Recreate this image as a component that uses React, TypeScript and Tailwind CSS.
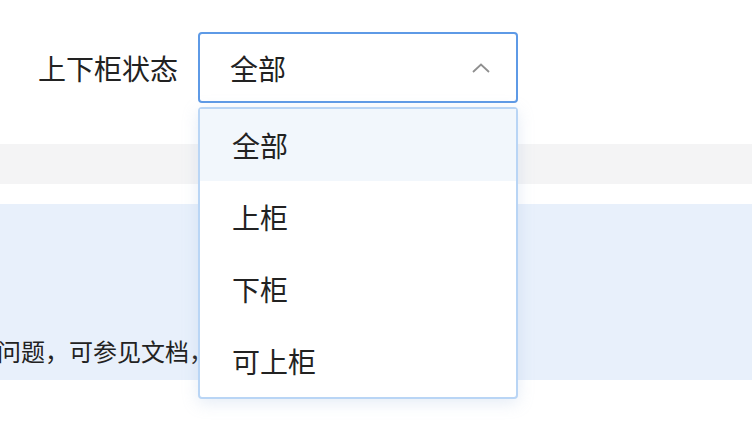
import React from "react";

const font = { fontFamily: '"Noto Sans CJK SC", "Noto Sans", sans-serif' };

export default function App() {
  const items = ["全部", "上柜", "下柜", "可上柜"];
  return (
    <div className="relative w-[752px] h-[446px] bg-white overflow-hidden text-[#222]" style={font}>
      <div className="flex items-center pt-[32px] pl-[38px] gap-[20px]">
        <span className="text-[28px] leading-none">上下柜状态</span>
        <div className="w-[320px] h-[71px] border-2 border-[#5e9ae6] rounded-[4px] flex items-center justify-between pl-[30px] pr-[26px]">
          <span className="text-[28px] leading-none">全部</span>
          <svg width="18" height="10" viewBox="0 0 18 10" fill="none">
            <path d="M1 9 L9 1.5 L17 9" stroke="#8f8f8f" strokeWidth="1.8" />
          </svg>
        </div>
      </div>
      <div className="mt-[41px] h-[40px] bg-[#f4f4f5]" />
      <div className="mt-[20px] h-[176px] bg-[#e8f0fb] flex items-end pb-[17px] -ml-[3px]">
        <span className="text-[24px] leading-none whitespace-nowrap">问题，可参见文档，</span>
      </div>
      <div className="absolute left-[198px] top-[107px] w-[320px] border-2 border-[#b9d5f5] rounded-[4px] bg-white shadow-[0_4px_16px_rgba(150,180,220,0.25)]">
        {items.map((t, i) => (
          <div
            key={t}
            className={`h-[72px] flex items-center pl-[32px] text-[28px] leading-none ${i === 0 ? "bg-[#f2f7fc]" : ""}`}
          >
            {t}
          </div>
        ))}
      </div>
    </div>
  );
}
